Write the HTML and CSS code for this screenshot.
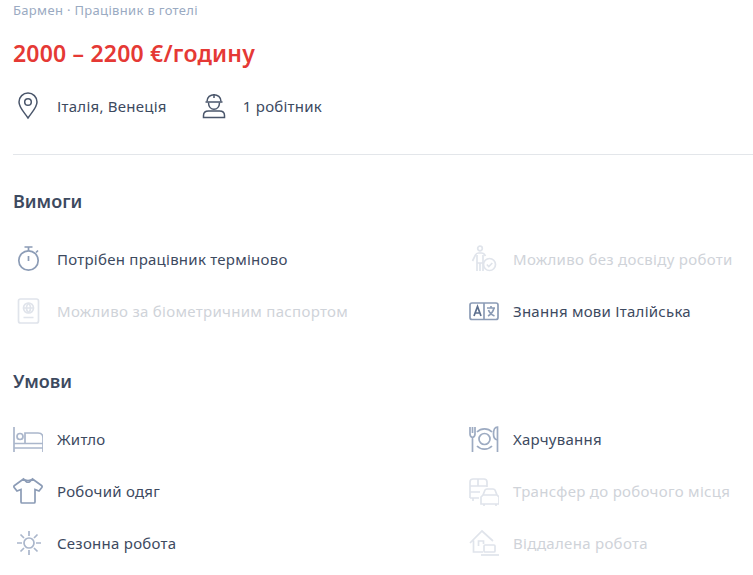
FILE: index.html
```html
<!DOCTYPE html>
<html lang="uk">
<head>
<meta charset="utf-8">
<title>Бармен</title>
<link rel="stylesheet" href="styles.css">
</head>
<body>
<main class="page">
  <p class="crumbs">Бармен · Працівник в готелі</p>
  <h1 class="price">2000 – 2200 €/годину</h1>
  <div class="meta">
    <div class="meta-item">
      <svg class="ico" viewBox="0 0 30 30"><g fill="none" stroke="#4a566b" stroke-width="1.500"><path d="M15 27c-4-6-9-10.500-9-16a9 9 0 0 1 18 0c0 5.500-5 10-9 16z"/><circle cx="15" cy="11" r="3.300"/></g></svg>
      <span>Італія, Венеція</span>
    </div>
    <div class="meta-item meta-worker">
      <svg class="ico" viewBox="0 0 30 30"><g fill="none" stroke="#4a566b" stroke-width="1.500"><path d="M8 10.500c0-9 14-9 14 0"/><path d="M6.500 11h17M15 3v4"/><path d="M9.500 11.500c0 9 11 9 11 0"/><path d="M4.500 26.500v-2c0-3 2-4.500 5-4.500h11c3 0 5 1.500 5 4.500v2z"/></g></svg>
      <span>1 робітник</span>
    </div>
  </div>
  <hr class="rule">
  <h2 class="heading">Вимоги</h2>
  <div class="grid">
    <div class="item">
      <svg class="ico" viewBox="0 0 30 30"><g fill="none" stroke="#8c9cb6" stroke-width="1.700"><circle cx="15.500" cy="16.500" r="9.700"/><path d="M11.500 3h8M15.500 3v4M15.500 12v5M23 8.500l2-2"/></g></svg>
      <span>Потрібен працівник терміново</span>
    </div>
    <div class="item off">
      <svg class="ico" viewBox="0 0 30 30"><g fill="none" stroke="#e0e4eb" stroke-width="1.700"><circle cx="11" cy="4.500" r="2.300"/><path d="M3.500 17l3-6c.5-1.300 1.500-2 3-2h3c2 0 3 1 4 3"/><path d="M8 11v16M14 11v16M8 19h6M11 19v8"/><circle cx="20.500" cy="20.500" r="6"/><path d="M17.800 20.500l2 2 3.500-3.500"/></g></svg>
      <span>Можливо без досвіду роботи</span>
    </div>
    <div class="item off">
      <svg class="ico" viewBox="0 0 30 30"><g fill="none" stroke="#e0e4eb" stroke-width="1.700"><rect x="5.500" y="3" width="20" height="24" rx="2"/><circle cx="15.500" cy="12" r="5"/><path d="M10.500 12h10M15.500 7c-2.500 3-2.500 7 0 10M15.500 7c2.500 3 2.500 7 0 10M10.500 21.500h10"/></g></svg>
      <span>Можливо за біометричним паспортом</span>
    </div>
    <div class="item">
      <svg class="ico" viewBox="0 0 30 30"><g fill="none" stroke="#8c9cb6" stroke-width="1.700"><rect x="1" y="7" width="28" height="16.500" rx="2"/><path d="M15 7v16.500"/><path stroke="#5c6f8e" d="M5 20l3.500-9.500 3.500 9.500M6.200 17h4.600"/><path d="M18 12h8M22 10v2M19 20c3-1.500 5-4 6-8M19.500 14c1 3 3.500 5 6 6"/></g></svg>
      <span>Знання мови Італійська</span>
    </div>
  </div>
  <h2 class="heading heading-next">Умови</h2>
  <div class="grid">
    <div class="item">
      <svg class="ico" viewBox="0 0 30 30"><g fill="none" stroke="#aab6cb" stroke-width="1.700"><path d="M1 3v25M30 28v-9M1 24h29M1 19.500h29"/><circle cx="7" cy="12.500" r="3"/><path d="M12 19.500V9h13c3 0 5 2 5 5v5.500"/></g></svg>
      <span>Житло</span>
    </div>
    <div class="item">
      <svg class="ico" viewBox="0 0 30 30"><g fill="none" stroke="#9dabc2" stroke-width="1.700"><path d="M1 3v7c0 2 1 3 2.500 3.500V28M3.500 3v6M6 3v7c0 2-1 3-2.500 3.500"/><circle cx="15.500" cy="15" r="5.500"/><path d="M8 8a10.500 10.500 0 0 1 15 0M8 22a10.500 10.500 0 0 0 15 0"/><path d="M28.500 28V3c-2.500 0-4 3-4 7s1 5.500 4 6"/></g></svg>
      <span>Харчування</span>
    </div>
    <div class="item">
      <svg class="ico" viewBox="0 0 30 30"><g fill="none" stroke="#8c9cb6" stroke-width="1.700"><path d="M10.500 3L1.500 9.500c-.800.600-.800 1.200-.3 2l2.800 3.500 4-1.500V26c0 .6.400 1 1 1h12c.6 0 1-.4 1-1V13.500l4 1.500 2.800-3.500c.5-.8.500-1.400-.3-2L19.500 3c-1.500 2-7.500 2-9 0z"/><path d="M12 4c1 3 5 3 6 0"/></g></svg>
      <span>Робочий одяг</span>
    </div>
    <div class="item off">
      <svg class="ico" viewBox="0 0 30 30"><g fill="none" stroke="#e0e4eb" stroke-width="1.700"><path d="M1 22V6c0-2 1.500-3 3-3h11c2 0 3 1 3 3v5M1 16h10M1 10h17M9 3v7M1 22h9M4 22v3"/><path d="M12 28v-7l2-2 2-5c.3-.8 1-1 2-1h6c1 0 1.700.2 2 1l2 5 2 2v7zM14 19h14M15 28v2M27 28v2"/></g></svg>
      <span>Трансфер до робочого місця</span>
    </div>
    <div class="item">
      <svg class="ico" viewBox="0 0 30 30"><g fill="none" stroke="#aab6cb" stroke-width="1.700"><circle cx="16" cy="15" r="5"/><path d="M16 3v5M16 22v5M4 15h5M23 15h5M7.500 6.500l3.500 3.500M21 20l3.500 3.500M24.500 6.500L21 10M11 20l-3.500 3.500"/></g></svg>
      <span>Сезонна робота</span>
    </div>
    <div class="item off">
      <svg class="ico" viewBox="0 0 30 30"><g fill="none" stroke="#e0e4eb" stroke-width="1.700"><path d="M1 15L13 3l11 10M4.500 12.500V24H14"/><path d="M9.500 18v-5h5v3"/><rect x="15" y="17" width="11" height="7" rx="1"/><path d="M12 27h18"/></g></svg>
      <span>Віддалена робота</span>
    </div>
  </div>
</main>
</body>
</html>
```
FILE: styles.css
```css
html, body {
  margin: 0;
  padding: 0;
  background: #fff;
}
body {
  font-family: "Noto Sans", "Open Sans", sans-serif;
  color: #3d4a5f;
  overflow: hidden;
  height: 575px;
}
.page {
  padding-left: 13px;
}
.crumbs {
  margin: 0;
  padding-top: 1px;
  font-size: 13px;
  line-height: 18px;
  letter-spacing: 0.33px;
  color: #9aaac2;
}
.price {
  margin: 19px 0 0;
  font-size: 23px;
  line-height: 30px;
  letter-spacing: 0.2px;
  font-weight: 600;
  color: #e53935;
}
.meta {
  display: flex;
  margin-top: 22px;
  height: 32px;
}
.meta-item, .item {
  display: flex;
  align-items: center;
  font-size: 15px;
  letter-spacing: 0.25px;
  gap: 14px;
}
.ico {
  width: 30px;
  height: 30px;
  flex: none;
}
.meta-worker {
  margin-left: 32px;
}
.rule {
  margin: 32px 0 0;
  border: 0;
  border-top: 1px solid #e3e6ea;
}
.heading {
  margin: 34px 0 0;
  font-size: 18px;
  line-height: 24px;
  font-weight: 600;
}
.heading-next {
  margin-top: 32px;
}
.grid {
  display: grid;
  grid-template-columns: 456px 1fr;
  grid-auto-rows: 52px;
  margin-top: 20px;
}
.item {
  height: 52px;
  white-space: nowrap;
}
.off {
  color: #cfd3d9;
  letter-spacing: 0.3px;
}
```
